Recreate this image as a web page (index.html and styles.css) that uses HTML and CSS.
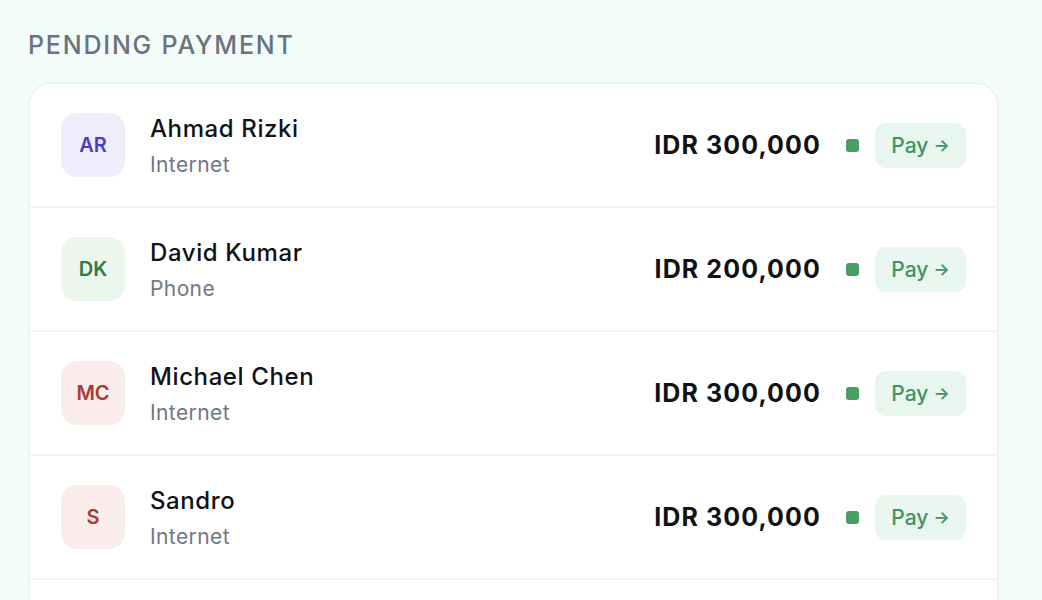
FILE: index.html
```html
<!DOCTYPE html>
<html>
<head>
<meta charset="utf-8">
<link rel="stylesheet" href="styles.css">
</head>
<body>
<main class="page">
  <h2 class="section-title">PENDING PAYMENT</h2>
  <div class="card">
    <div class="row">
      <div class="avatar avatar-purple">AR</div>
      <div class="info">
        <div class="name">Ahmad Rizki</div>
        <div class="sub">Internet</div>
      </div>
      <div class="amount">IDR 300,000</div>
      <span class="dot"></span>
      <button class="pay">Pay <span class="arrow">→</span></button>
    </div>
    <div class="row">
      <div class="avatar avatar-green">DK</div>
      <div class="info">
        <div class="name">David Kumar</div>
        <div class="sub">Phone</div>
      </div>
      <div class="amount">IDR 200,000</div>
      <span class="dot"></span>
      <button class="pay">Pay <span class="arrow">→</span></button>
    </div>
    <div class="row">
      <div class="avatar avatar-red">MC</div>
      <div class="info">
        <div class="name">Michael Chen</div>
        <div class="sub">Internet</div>
      </div>
      <div class="amount">IDR 300,000</div>
      <span class="dot"></span>
      <button class="pay">Pay <span class="arrow">→</span></button>
    </div>
    <div class="row">
      <div class="avatar avatar-red">S</div>
      <div class="info">
        <div class="name">Sandro</div>
        <div class="sub">Internet</div>
      </div>
      <div class="amount">IDR 300,000</div>
      <span class="dot"></span>
      <button class="pay">Pay <span class="arrow">→</span></button>
    </div>
    <div class="row-more"></div>
  </div>
</main>
</body>
</html>
```
FILE: styles.css
```css
html, body {
  margin: 0;
  padding: 0;
  background: #f2fcf8;
  font-family: "Inter", "Noto Sans", sans-serif;
  overflow: hidden;
}
.page {
  padding: 29px 43px 0 28px;
}
.section-title {
  margin: 0 0 20px 0;
  font-size: 25px;
  line-height: 33px;
  font-weight: 500;
  letter-spacing: 1.8px;
  color: #6b7280;
}
.card {
  width: 971px;
  box-sizing: border-box;
  background: #ffffff;
  border: 2px solid #e8f6f0;
  border-radius: 24px;
  overflow: hidden;
}
.row {
  display: flex;
  align-items: center;
  height: 124px;
  box-sizing: border-box;
  padding: 0 31px 0 31px;
  border-bottom: 2px solid #edf7f3;
}
.row-more {
  height: 60px;
}
.avatar {
  width: 64px;
  height: 64px;
  border-radius: 16px;
  display: flex;
  align-items: center;
  justify-content: center;
  font-size: 20px;
  font-weight: 600;
  flex-shrink: 0;
}
.avatar-purple { background: #efedfb; color: #4b3fbd; }
.avatar-green { background: #ebf6ee; color: #2f7a47; }
.avatar-red { background: #fbecec; color: #ad3a32; }
.info {
  margin-left: 25px;
  flex: 1;
  display: flex;
  flex-direction: column;
  gap: 8px;
  padding-top: 1px;
}
.name {
  font-size: 24px;
  line-height: 30px;
  font-weight: 500;
  color: #111215;
  letter-spacing: 0.6px;
}
.sub {
  font-size: 21px;
  line-height: 26px;
  color: #717784;
  letter-spacing: 0.4px;
}
.amount {
  font-size: 25px;
  font-weight: 700;
  color: #111215;
  letter-spacing: 1.1px;
}
.dot {
  width: 13px;
  height: 13px;
  border-radius: 3px;
  background: #4a9d63;
  margin-left: 25px;
  margin-right: 16px;
}
.pay {
  width: 91px;
  height: 45px;
  border: none;
  border-radius: 11px;
  background: #e9f6ef;
  color: #3f9461;
  font-family: inherit;
  font-size: 21px;
  font-weight: 500;
  padding: 0;
  display: flex;
  align-items: center;
  justify-content: center;
  gap: 5px;
}
.arrow {
  font-size: 17px;
  font-weight: 600;
}
```
